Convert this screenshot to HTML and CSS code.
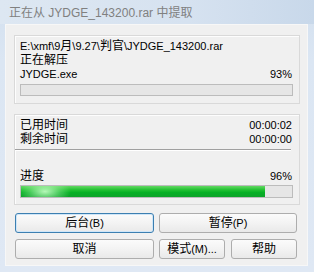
FILE: index.html
```html
<!DOCTYPE html>
<html lang="zh">
<head>
<meta charset="utf-8">
<link rel="stylesheet" href="styles.css">
</head>
<body>
<div class="window">
  <div class="titlebar">正在从 JYDGE_143200.rar 中提取</div>
  <div class="client">
    <div class="group g1">
      <div class="line"><span class="l">E:\xmf\9</span>月<span class="l">\9.27\</span>判官<span class="l">\JYDGE_143200.rar</span></div>
      <div class="line">正在解压</div>
      <div class="line row"><span class="l">JYDGE.exe</span><span class="l">93%</span></div>
      <div class="progress"></div>
    </div>
    <div class="group g2">
      <div class="line row"><span>已用时间</span><span class="l">00:00:02</span></div>
      <div class="line row"><span>剩余时间</span><span class="l">00:00:00</span></div>
      <div class="sep"></div>
      <div class="line row label"><span>进度</span><span class="l">96%</span></div>
      <div class="progress"><div class="fill" style="width:90%"></div></div>
    </div>
    <div class="buttons">
      <div class="btn default">后台<span class="l">(B)</span></div>
      <div class="btn">暂停<span class="l">(P)</span></div>
      <div class="btn">取消</div>
      <div class="pair">
        <div class="btn">模式<span class="l">(M)...</span></div>
        <div class="btn">帮助</div>
      </div>
    </div>
  </div>
</div>
</body>
</html>
```
FILE: styles.css
```css
html, body {
  margin: 0;
  padding: 0;
}
body {
  width: 314px;
  height: 272px;
  overflow: hidden;
  font-family: "Liberation Sans", "Noto Sans CJK SC", sans-serif;
  font-size: 12px;
  color: #000;
}
.l {
  font-size: 11px;
}
.window {
  width: 314px;
  height: 272px;
  box-sizing: border-box;
  background: linear-gradient(to bottom, #d3e0ef 0px, #dbe6f3 60px, #dfe8f4 100%);
  display: flex;
  flex-direction: column;
}
.titlebar {
  height: 24px;
  line-height: 26px;
  padding-left: 9px;
  font-size: 12px;
  color: #808080;
  background: linear-gradient(to right, #dde7f2 0%, #d6e2f0 60%, #c8d8ea 100%);
}
.client {
  margin: 0 6px 0 5px;
  height: 242px;
  box-sizing: border-box;
  background: #f0f0f0;
  border: 1px solid #f7f7f7;
  padding: 10px 7px 0 8px;
  display: flex;
  flex-direction: column;
}
.group {
  border: 1px solid #d9d9d9;
  box-shadow: inset 1px 1px 0 #fdfdfd;
  padding: 3px 6px 0 5px;
}
.g1 {
  height: 69px;
  box-sizing: border-box;
}
.g2 {
  margin-top: 10px;
  height: 91px;
  box-sizing: border-box;
}
.line {
  height: 14px;
  line-height: 14px;
  white-space: nowrap;
}
.row {
  display: flex;
  justify-content: space-between;
  align-items: baseline;
  padding-right: 1px;
}
.progress {
  margin-top: 3px;
  height: 12px;
  box-sizing: border-box;
  border: 1px solid #bcbcbc;
  background: #e6e6e6;
  display: flex;
}
.g2 .progress {
  margin-top: 2px;
  height: 13px;
}
.fill {
  height: 100%;
  background:
    radial-gradient(ellipse 26px 12px at 24px 50%, rgba(200,255,200,0.9), rgba(200,255,200,0.3) 60%, rgba(200,255,200,0) 100%),
    linear-gradient(to bottom, #63d863 0%, #22c132 35%, #06b025 60%, #0ea32a 100%);
}
.sep {
  margin: 3px 2px 0 -5px;
  height: 1px;
  background: #a0a0a0;
  border-bottom: 1px solid #ffffff;
}
.label {
  margin-top: 18px;
}
.buttons {
  margin: 8px 3px 0 1px;
  display: grid;
  grid-template-columns: 139px 138px;
  column-gap: 5px;
  row-gap: 6px;
}
.pair {
  display: grid;
  grid-template-columns: 66px 66px;
  column-gap: 6px;
}
.btn {
  height: 20px;
  box-sizing: border-box;
  border: 1px solid #adadad;
  border-radius: 3px;
  background: linear-gradient(to bottom, #fbfbfb 0%, #f3f3f3 50%, #e9e9e9 100%);
  text-align: center;
  line-height: 18px;
  white-space: nowrap;
}
.btn.default {
  border-color: #3c7fb1;
  box-shadow: inset 0 0 0 1px #cfe6f8;
}
```
